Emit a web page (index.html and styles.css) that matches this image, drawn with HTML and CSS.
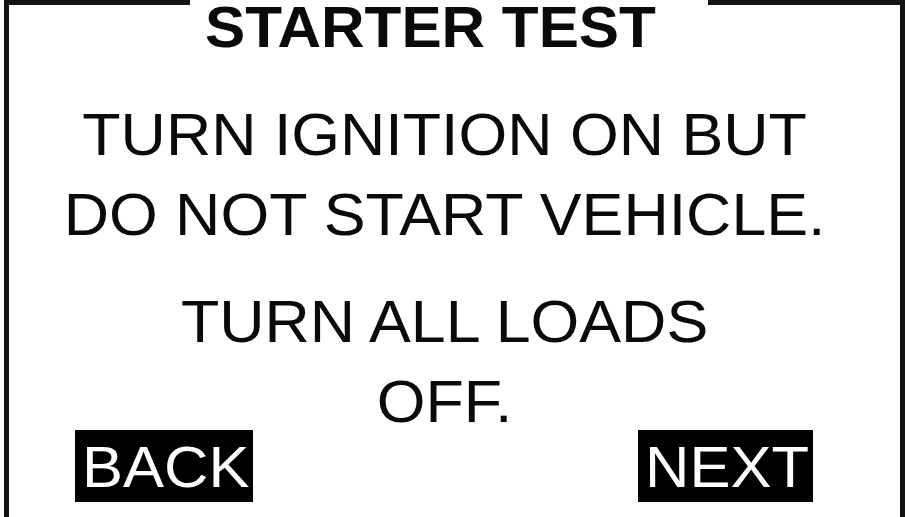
FILE: index.html
```html
<!DOCTYPE html>
<html lang="en">
<head>
<meta charset="utf-8">
<title>Starter Test</title>
<link rel="stylesheet" href="styles.css">
</head>
<body>
<div class="frame">
  <header class="head">
    <span class="bar bar-left"></span>
    <h1 class="title"><span class="title-text">STARTER TEST</span></h1>
    <span class="bar bar-right"></span>
  </header>
  <div class="message">
    <p class="para para-first">TURN IGNITION ON BUT<br>DO NOT START VEHICLE.</p>
    <p class="para para-second">TURN ALL LOADS<br>OFF.</p>
  </div>
  <div class="actions">
    <button class="btn" type="button"><span class="btn-text">BACK</span></button>
    <button class="btn" type="button"><span class="btn-text">NEXT</span></button>
  </div>
</div>
</body>
</html>
```

FILE: styles.css
```css
html, body {
  margin: 0;
  padding: 0;
  background: #ffffff;
  overflow: hidden;
}

body {
  width: 905px;
  height: 517px;
  font-family: "Liberation Sans", Arial, sans-serif;
  color: #0a0a0a;
}

.frame {
  box-sizing: border-box;
  margin-left: 4px;
  width: 901px;
  height: 522px;
  border-left: 5px solid #141414;
  border-right: 5px solid #141414;
  border-bottom: 5px solid #141414;
  display: flex;
  flex-direction: column;
}

.head {
  display: flex;
  align-items: flex-start;
  height: 52px;
}

.bar {
  display: block;
  height: 5px;
  background: #141414;
}

.bar-left {
  width: 181px;
  flex: none;
}

.bar-right {
  flex: 1;
}

.title {
  margin: 0;
  padding: 2px 69px 0 15px;
  font-size: 58px;
  font-weight: bold;
  line-height: 50px;
  white-space: nowrap;
  background: #ffffff;
}

.title-text {
  display: inline-block;
  transform: scaleX(1.039);
  transform-origin: left center;
}

.message {
  padding-right: 19px;
  text-align: center;
  font-size: 60px;
  line-height: 80px;
  transform: scaleX(1.045);
}

.para {
  margin: 0;
}

.para-first {
  margin-top: 43px;
}

.para-second {
  margin-top: 27px;
}

.actions {
  display: flex;
  justify-content: space-between;
  margin-top: -12px;
  padding: 0 87px 0 66px;
}

.btn {
  box-sizing: border-box;
  height: 72px;
  margin: 0;
  padding: 2px 13px 0 7px;
  border: none;
  border-radius: 0;
  background: #000000;
  color: #ffffff;
  font-family: "Liberation Sans", Arial, sans-serif;
  font-size: 58px;
  line-height: 70px;
  text-align: left;
}

.btn-text {
  display: inline-block;
  transform: scaleX(1.06);
  transform-origin: left center;
}
```
